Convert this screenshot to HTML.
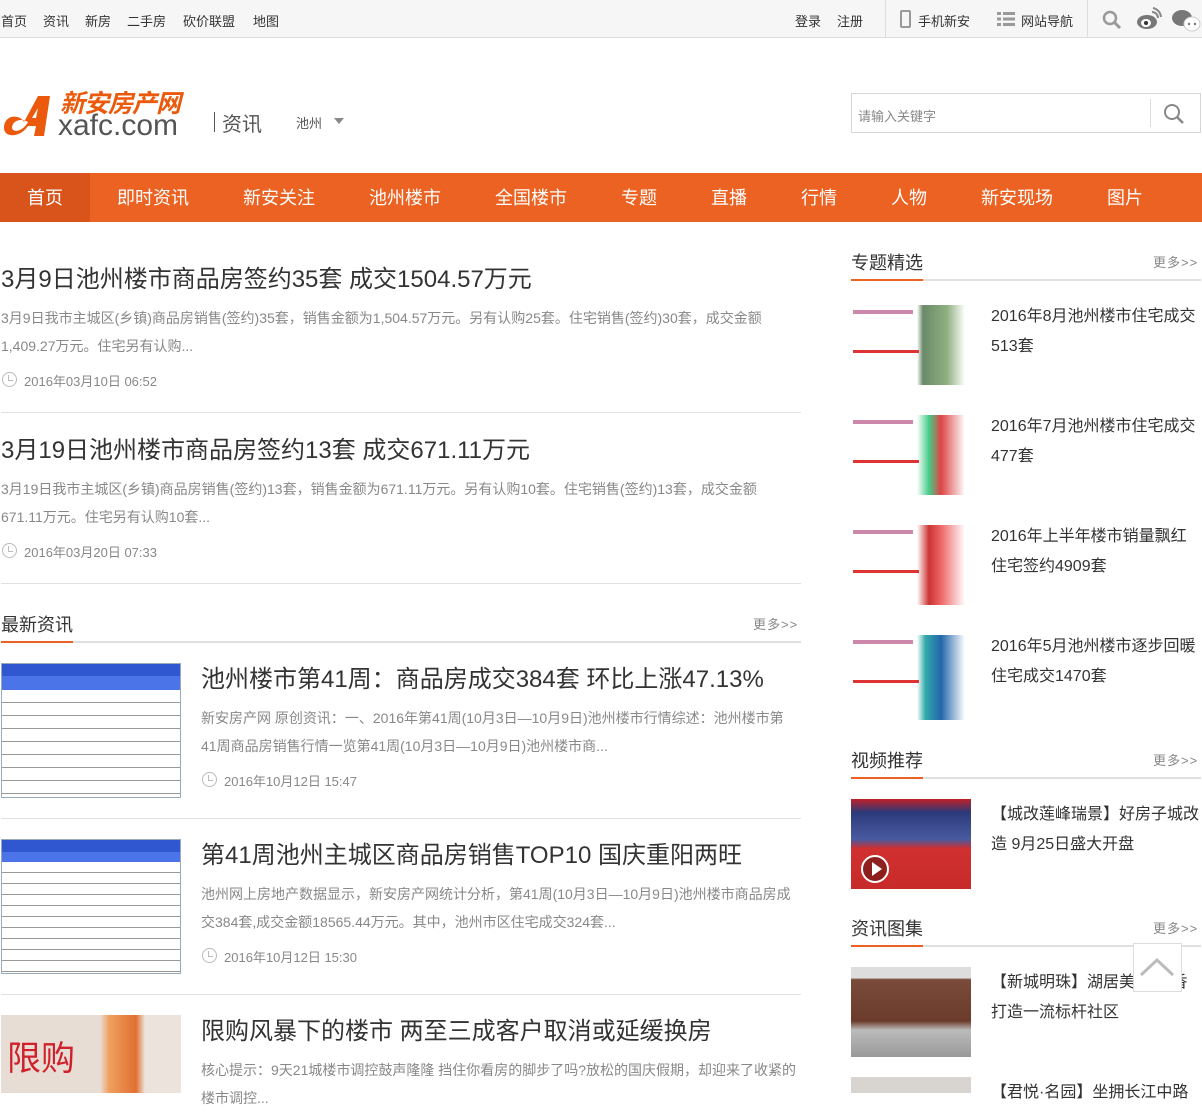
<!DOCTYPE html>
<html><head><meta charset="utf-8"><style>
*{margin:0;padding:0;box-sizing:border-box}
body{width:1202px;height:1093px;overflow:hidden;background:#fff;font-family:"Liberation Sans","Noto Sans CJK SC",sans-serif;color:#333;position:relative}
.a{position:absolute;white-space:nowrap}
.top{position:absolute;left:0;top:0;width:1202px;height:38px;background:#f6f6f6;border-bottom:1px solid #ddd}
.top span{position:absolute;top:11px;font-size:13px;color:#333}
.nav{position:absolute;left:0;top:173px;width:1202px;height:49px;background:#eb6222}
.nav span{position:absolute;top:0;height:49px;line-height:51px;font-size:18px;color:#fff;text-align:center}
.t{font-size:24px;color:#333}
.d{font-size:14px;color:#888;line-height:28px;white-space:normal}
.dt{font-size:13px;color:#888}
.clk{position:absolute;width:15px;height:15px;border:1.5px solid #bbb;border-radius:50%}
.clk:after{content:"";position:absolute;left:5px;top:2px;width:4px;height:5px;border-left:1.5px solid #bbb;border-bottom:1.5px solid #bbb}
.hl{position:absolute;height:2px;background:#e0e0e0}
.ho{position:absolute;height:2px;background:#eb6222}
.more{font-size:13px;color:#888;letter-spacing:1px}
.st{font-size:16px;color:#333;line-height:30px;white-space:normal}
.img{position:absolute}
</style></head><body>
<div class="top">
<span style="left:1px">首页</span><span style="left:43px">资讯</span><span style="left:85px">新房</span><span style="left:127px">二手房</span><span style="left:183px">砍价联盟</span><span style="left:253px">地图</span>
<span style="left:795px">登录</span><span style="left:837px">注册</span>
<div style="position:absolute;left:885px;top:0;width:1px;height:38px;background:#ddd"></div>
<div style="position:absolute;left:900px;top:10px;width:11px;height:18px;border:2px solid #999;border-radius:2px"></div>
<span style="left:918px">手机新安</span>
<div style="position:absolute;left:997px;top:12px;width:18px;height:14px;background:repeating-linear-gradient(#999 0 3px,transparent 3px 5.5px)"></div>
<div style="position:absolute;left:1001px;top:11px;width:2px;height:16px;background:#f6f6f6"></div>
<span style="left:1021px">网站导航</span>
<div style="position:absolute;left:1087px;top:0;width:1px;height:38px;background:#ddd"></div>
<svg style="position:absolute;left:1102px;top:10px" width="20" height="20"><circle cx="8" cy="8" r="6" fill="none" stroke="#999" stroke-width="2.5"/><path d="M12.5 12.5L18 18" stroke="#999" stroke-width="3"/></svg>
<svg style="position:absolute;left:1136px;top:6px" width="26" height="26"><ellipse cx="11" cy="16" rx="10" ry="7" fill="#777"/><ellipse cx="10" cy="17" rx="5" ry="4" fill="#fff"/><circle cx="10" cy="17" r="2" fill="#333"/><path d="M16 6a6 6 0 0 1 6 6M17 2a10 10 0 0 1 8 9" stroke="#888" stroke-width="2" fill="none"/></svg>
<svg style="position:absolute;left:1171px;top:8px" width="30" height="24"><ellipse cx="11" cy="10" rx="10" ry="8" fill="#777"/><ellipse cx="21" cy="16" rx="8" ry="7" fill="#fff" stroke="#ccc"/><circle cx="18" cy="16" r="1.2" fill="#777"/><circle cx="24" cy="16" r="1.2" fill="#777"/></svg>
</div>
<!-- logo -->
<svg style="position:absolute;left:2px;top:92px" width="60" height="48"><path d="M2 36 C2 22 18 22 22 30 L36 4 L48 4 L42 44 L32 44 L34 34 L26 34 C18 46 2 46 2 36 Z M10 36 C12 42 22 38 26 30 C20 26 10 28 10 36Z M34 26 L36 16 L30 26Z" fill="#eb5a0c" fill-rule="evenodd"/></svg>
<div class="a" style="left:60px;top:91px;font-size:25px;line-height:26px;font-weight:bold;color:#eb5a0c;letter-spacing:-1px;font-style:italic">新安房产网</div>
<div class="a" style="left:58px;top:111px;font-size:30px;line-height:30px;color:#555">xafc.com</div>
<div style="position:absolute;left:214px;top:112px;width:1px;height:20px;background:#555"></div>
<div class="a" style="left:222px;top:108px;font-size:20px;color:#555">资讯</div>
<div class="a" style="left:296px;top:113px;font-size:13px;color:#555">池州</div>
<div style="position:absolute;left:334px;top:118px;border:5px solid transparent;border-top:6px solid #888"></div>
<div style="position:absolute;left:851px;top:93px;width:350px;height:40px;border:1px solid #d6d6d6"></div>
<div class="a" style="left:858px;top:106px;font-size:13px;color:#888">请输入关键字</div>
<div style="position:absolute;left:1150px;top:99px;width:1px;height:28px;background:#ddd"></div>
<svg style="position:absolute;left:1163px;top:103px" width="22" height="22"><circle cx="9" cy="9" r="7" fill="none" stroke="#888" stroke-width="2"/><path d="M14 14L20 20" stroke="#888" stroke-width="2.5"/></svg>
<div class="nav">
<span style="left:0;width:90px;background:#d9541a">首页</span>
<span style="left:90px;width:126px">即时资讯</span><span style="left:216px;width:126px">新安关注</span><span style="left:342px;width:126px">池州楼市</span><span style="left:468px;width:126px">全国楼市</span><span style="left:594px;width:90px">专题</span><span style="left:684px;width:90px">直播</span><span style="left:774px;width:90px">行情</span><span style="left:864px;width:90px">人物</span><span style="left:954px;width:126px">新安现场</span><span style="left:1080px;width:90px">图片</span>
</div>
<!-- articles -->
<div class="a t" style="left:1px;top:259px">3月9日池州楼市商品房签约35套 成交1504.57万元</div>
<div class="a d" style="left:1px;top:304px;width:770px">3月9日我市主城区(乡镇)商品房销售(签约)35套，销售金额为1,504.57万元。另有认购25套。住宅销售(签约)30套，成交金额1,409.27万元。住宅另有认购...</div>
<div class="clk" style="left:2px;top:372px"></div><div class="a dt" style="left:24px;top:371px">2016年03月10日 06:52</div>
<div class="hl" style="left:1px;top:412px;width:800px;height:1px"></div>
<div class="a t" style="left:1px;top:430px">3月19日池州楼市商品房签约13套 成交671.11万元</div>
<div class="a d" style="left:1px;top:475px;width:770px">3月19日我市主城区(乡镇)商品房销售(签约)13套，销售金额为671.11万元。另有认购10套。住宅销售(签约)13套，成交金额671.11万元。住宅另有认购10套...</div>
<div class="clk" style="left:2px;top:543px"></div><div class="a dt" style="left:24px;top:542px">2016年03月20日 07:33</div>
<div class="hl" style="left:1px;top:583px;width:800px;height:1px"></div>
<div class="a" style="left:1px;top:611px;font-size:18px">最新资讯</div>
<div class="a more" style="left:753px;top:614px">更多&gt;&gt;</div>
<div class="hl" style="left:1px;top:641px;width:800px"></div><div class="ho" style="left:1px;top:641px;width:72px"></div>
<div class="img" style="left:1px;top:663px;width:180px;height:135px;background:#fff;border:1px solid #9ab"><div style="height:12px;background:#3056d0"></div><div style="height:14px;background:#4a74e8"></div><div style="height:107px;background:repeating-linear-gradient(#fff 0 12px,#999 12px 13px)"></div></div>
<div class="a t" style="left:201px;top:659px">池州楼市第41周：商品房成交384套 环比上涨47.13%</div>
<div class="a d" style="left:201px;top:704px;width:592px">新安房产网 原创资讯：一、2016年第41周(10月3日—10月9日)池州楼市行情综述：池州楼市第41周商品房销售行情一览第41周(10月3日—10月9日)池州楼市商...</div>
<div class="clk" style="left:202px;top:772px"></div><div class="a dt" style="left:224px;top:771px">2016年10月12日 15:47</div>
<div class="hl" style="left:1px;top:818px;width:800px;height:1px"></div>
<div class="img" style="left:1px;top:839px;width:180px;height:135px;background:#fff;border:1px solid #9ab"><div style="height:12px;background:#3056d0"></div><div style="height:10px;background:#4a74e8"></div><div style="height:111px;background:repeating-linear-gradient(#fff 0 10px,#999 10px 11px)"></div></div>
<div class="a t" style="left:201px;top:835px">第41周池州主城区商品房销售TOP10 国庆重阳两旺</div>
<div class="a d" style="left:201px;top:880px;width:600px">池州网上房地产数据显示，新安房产网统计分析，第41周(10月3日—10月9日)池州楼市商品房成交384套,成交金额18565.44万元。其中，池州市区住宅成交324套...</div>
<div class="clk" style="left:202px;top:948px"></div><div class="a dt" style="left:224px;top:947px">2016年10月12日 15:30</div>
<div class="hl" style="left:1px;top:994px;width:800px;height:1px"></div>
<div class="img" style="left:1px;top:1015px;width:180px;height:78px;background:linear-gradient(90deg,#e8ddd5 0,#e8ddd5 55%,#f0a060 60%,#e07030 75%,#ece4dc 80%)"><div class="a" style="left:6px;top:16px;font-size:34px;color:#d0202a">限购</div></div>
<div class="a t" style="left:201px;top:1011px">限购风暴下的楼市 两至三成客户取消或延缓换房</div>
<div class="a d" style="left:201px;top:1056px;width:600px">核心提示：9天21城楼市调控鼓声隆隆 挡住你看房的脚步了吗?放松的国庆假期，却迎来了收紧的楼市调控...</div>
<!-- sidebar -->
<div class="a" style="left:851px;top:249px;font-size:18px">专题精选</div>
<div class="a more" style="left:1153px;top:252px">更多&gt;&gt;</div>
<div class="hl" style="left:851px;top:279px;width:350px"></div><div class="ho" style="left:851px;top:279px;width:72px"></div>
<div class="img" style="left:851px;top:305px;width:120px;height:80px;background:linear-gradient(90deg,#fff 55%,#6a8a6a 60%,#8fb080 80%,#fff 95%)"><div style="position:absolute;left:2px;top:5px;width:60px;height:4px;background:#c8a"></div><div style="position:absolute;left:2px;top:45px;width:66px;height:3px;background:#d33"></div></div>
<div class="a st" style="left:991px;top:302px;width:212px">2016年8月池州楼市住宅成交513套</div>
<div class="img" style="left:851px;top:415px;width:120px;height:80px;background:linear-gradient(90deg,#fff 55%,#4c8 65%,#d44 75%,#fff 95%)"><div style="position:absolute;left:2px;top:5px;width:60px;height:4px;background:#c8a"></div><div style="position:absolute;left:2px;top:45px;width:66px;height:3px;background:#d33"></div></div>
<div class="a st" style="left:991px;top:412px;width:212px">2016年7月池州楼市住宅成交477套</div>
<div class="img" style="left:851px;top:525px;width:120px;height:80px;background:linear-gradient(90deg,#fff 55%,#c33 65%,#e66 75%,#fff 95%)"><div style="position:absolute;left:2px;top:5px;width:60px;height:4px;background:#c8a"></div><div style="position:absolute;left:2px;top:45px;width:66px;height:3px;background:#d33"></div></div>
<div class="a st" style="left:991px;top:522px;width:212px">2016年上半年楼市销量飘红 住宅签约4909套</div>
<div class="img" style="left:851px;top:635px;width:120px;height:85px;background:linear-gradient(90deg,#fff 55%,#3aa 62%,#2266aa 75%,#fff 95%)"><div style="position:absolute;left:2px;top:5px;width:60px;height:4px;background:#c8a"></div><div style="position:absolute;left:2px;top:45px;width:66px;height:3px;background:#d33"></div></div>
<div class="a st" style="left:991px;top:632px;width:212px">2016年5月池州楼市逐步回暖 住宅成交1470套</div>
<div class="a" style="left:851px;top:747px;font-size:18px">视频推荐</div>
<div class="a more" style="left:1153px;top:750px">更多&gt;&gt;</div>
<div class="hl" style="left:851px;top:777px;width:350px"></div><div class="ho" style="left:851px;top:777px;width:72px"></div>
<div class="img" style="left:851px;top:799px;width:120px;height:90px;background:linear-gradient(#c02028 0,#2a3a7a 15%,#4a5aa0 45%,#d03030 55%,#c82a2a 100%)"><div style="position:absolute;left:10px;top:56px;width:28px;height:28px;border:2px solid #fff;border-radius:50%;background:rgba(0,0,0,.3)"></div><div style="position:absolute;left:21px;top:63px;border:7px solid transparent;border-left:10px solid #fff;border-right:0"></div></div>
<div class="a st" style="left:991px;top:800px;width:212px">【城改莲峰瑞景】好房子城改造 9月25日盛大开盘</div>
<div class="a" style="left:851px;top:915px;font-size:18px">资讯图集</div>
<div class="a more" style="left:1153px;top:918px">更多&gt;&gt;</div>
<div class="hl" style="left:851px;top:945px;width:350px"></div><div class="ho" style="left:851px;top:945px;width:72px"></div>
<div class="img" style="left:851px;top:967px;width:120px;height:90px;background:linear-gradient(#ddd 0,#ddd 12%,#7a4a3a 14%,#6a3a2a 60%,#bbb 70%,#999 100%)"></div>
<div class="a st" style="left:991px;top:968px;width:212px">【新城明珠】湖居美景 书香 打造一流标杆社区</div>
<div class="img" style="left:851px;top:1077px;width:120px;height:16px;background:#d8d4d0"></div>
<div class="a st" style="left:991px;top:1078px;width:212px">【君悦·名园】坐拥长江中路</div>
<div style="position:absolute;left:1133px;top:943px;width:49px;height:49px;border:1px solid #ddd;background:#fff"><svg width="47" height="47"><path d="M7 31L23 16L39 31" stroke="#bbb" stroke-width="3" fill="none"/></svg></div>
</body></html>
